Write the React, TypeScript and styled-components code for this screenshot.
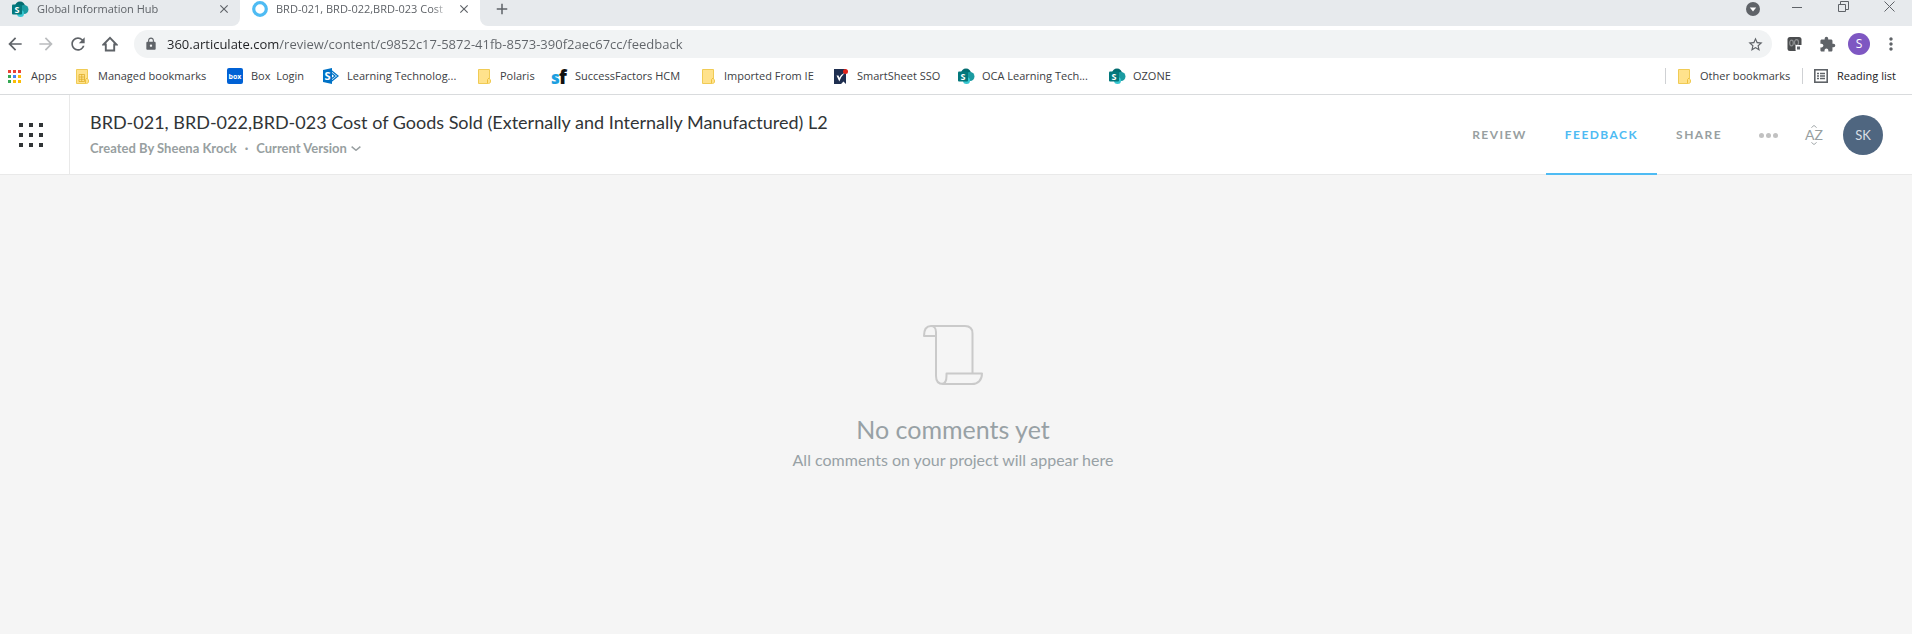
import React from "react";
import styled, { createGlobalStyle } from "styled-components";
import {
  MdArrowBack,
  MdArrowForward,
  MdRefresh,
  MdLock,
  MdStarBorder,
  MdExtension,
  MdMoreVert,
  MdClose,
  MdAdd,
} from "react-icons/md";

const uiFont = `"Open Sans", "Noto Sans", sans-serif`;
const appFont = `Lato, "Open Sans", sans-serif`;

const GlobalStyle = createGlobalStyle`
  *, *::before, *::after { box-sizing: border-box; }
  body { margin: 0; background: #f5f5f5; font-family: ${appFont}; }
  button { margin: 0; padding: 0; border: 0; background: none; font: inherit; color: inherit; cursor: pointer; }
  a { color: inherit; text-decoration: none; }
  svg { display: block; flex: none; }
`;

const Page = styled.div`
  display: flex;
  flex-direction: column;
  min-height: 100vh;
`;

/* Browser chrome */

const Browser = styled.div`
  background: #fff;
  font-family: ${uiFont};
  font-size: 11px;
  line-height: 16px;
  color: #3c4043;
`;

const TabStrip = styled.div`
  display: flex;
  height: 26px;
`;

const BrowserTab = styled.div<{ $active?: boolean }>`
  display: flex;
  align-items: center;
  width: 240px;
  padding: 0 9px 8px 12px;
  color: #5f6368;
  background: ${(p) => (p.$active ? "#fff" : "#e7eaed")};
  border-bottom-right-radius: ${(p) => (p.$active ? "0" : "8px")};
`;

const TabName = styled.button`
  flex: 1;
  min-width: 0;
  margin: 0 8px;
  overflow: hidden;
  white-space: nowrap;
  text-align: left;
  mask-image: linear-gradient(90deg, #000 calc(100% - 16px), transparent);
`;

const StripRest = styled.div`
  flex: 1;
  display: flex;
  align-items: flex-start;
  justify-content: space-between;
  padding: 0 0 0 14px;
  background: #e7eaed;
  border-bottom-left-radius: 8px;
  color: #5f6368;
`;

const WindowControls = styled.div`
  display: flex;
  align-items: flex-start;
`;

const IconButton = styled.button<{ $w: number; $h: number; $color?: string }>`
  display: flex;
  flex: none;
  align-items: center;
  justify-content: center;
  width: ${(p) => p.$w}px;
  height: ${(p) => p.$h}px;
  color: ${(p) => p.$color ?? "#5f6368"};
`;

const Toolbar = styled.div`
  display: flex;
  align-items: center;
  height: 35px;
  padding: 1px 5px 0 0;
`;

const Omnibox = styled.label`
  flex: 1;
  display: flex;
  align-items: center;
  height: 28px;
  margin: 0 7px 0 8px;
  padding: 0 2px 0 10px;
  border-radius: 14px;
  background: #f1f3f4;
  color: #5f6368;
`;

const UrlInput = styled.input`
  flex: 1;
  min-width: 0;
  margin-left: 9px;
  padding: 0;
  border: 0;
  outline: 0;
  font: 13px/20px ${uiFont};
  color: #5f6368;
  background: linear-gradient(90deg, #202124 112px, #5f6368 112px);
  background-clip: text;
  -webkit-background-clip: text;
  -webkit-text-fill-color: transparent;
`;

const Profile = styled.button`
  width: 22px;
  height: 22px;
  margin: 0 5px;
  border-radius: 50%;
  background: #7e57c2;
  color: #fff;
  font: 12px/22px ${uiFont};
`;

const BookmarksBar = styled.nav`
  display: flex;
  align-items: center;
  height: 34px;
  padding: 0 14px 3px 7px;
  border-bottom: 1px solid #d9dbdd;
`;

const Bookmark = styled.a`
  display: flex;
  align-items: center;
  gap: 8px;
  margin-right: 16px;
  white-space: pre;
`;

const IconSlot = styled.span`
  display: flex;
  justify-content: center;
  width: 16px;
`;

const BookmarkLabel = styled.span<{ $w: number }>`
  width: ${(p) => p.$w}px;
  text-align: left;
  white-space: pre;
`;

const BarEnd = styled.div`
  display: flex;
  align-items: center;
  margin-left: auto;
`;

const BarItem = styled.button`
  display: flex;
  align-items: center;
  gap: 8px;
  height: 16px;
  padding: 0 10px;
  border-left: 1px solid #cfd1d4;

  &:last-child {
    padding-right: 0;
    color: #202124;
  }
`;

/* Review application */

const Header = styled.header`
  display: flex;
  height: 80px;
  padding-right: 29px;
  background: #fff;
  box-shadow: inset 0 -1px #e9e9e9;
`;

const Launcher = styled.button`
  display: grid;
  grid-template-columns: repeat(3, 4px);
  gap: 6px;
  place-content: center;
  width: 70px;
  padding-right: 7px;
  border-right: 1px solid #e9e9e9;
`;

const LauncherDot = styled.span`
  height: 4px;
  background: #313537;
`;

const Project = styled.div`
  flex: 1;
  min-width: 0;
  padding: 16px 20px 0;
`;

const ProjectTitle = styled.h1`
  margin: 0 0 7px;
  font-size: 18px;
  font-weight: 400;
  line-height: 22px;
  color: #313537;
  white-space: nowrap;
`;

const ProjectMeta = styled.div`
  display: flex;
  align-items: center;
  gap: 8px;
  font-size: 13px;
  font-weight: 700;
  line-height: 16px;
  color: #989fa1;
`;

const VersionButton = styled.button`
  display: flex;
  align-items: center;
  gap: 4px;
`;

const HeaderNav = styled.nav`
  display: flex;
`;

const NavLink = styled.a<{ $active?: boolean }>`
  display: flex;
  align-items: center;
  padding: 0 19px;
  border-bottom: 2px solid ${(p) => (p.$active ? "#4ebbf3" : "transparent")};
  color: ${(p) => (p.$active ? "#4ebbf3" : "#989fa1")};
  font-size: 12px;
  font-weight: 700;
  letter-spacing: 0.12em;
`;

const HeaderTools = styled.div`
  display: flex;
  align-items: center;
  margin-left: 18px;
`;

const MoreButton = styled.button`
  display: flex;
  gap: 2px;
  margin-right: 27px;
`;

const MoreDot = styled.span`
  width: 5px;
  height: 5px;
  border-radius: 50%;
  background: #c1c1c1;
`;

const LanguageButton = styled.button`
  display: flex;
  flex-direction: column;
  align-items: center;
  margin-right: 20px;
  font-size: 14px;
  line-height: 14px;
  color: #989fa1;
`;

const Avatar = styled.button`
  width: 40px;
  height: 40px;
  border-radius: 50%;
  background: #4f6680;
  color: #d9dfe5;
  font-size: 13px;
`;

const Empty = styled.main`
  display: flex;
  flex-direction: column;
  align-items: center;
  padding: 150px 6px 40px 0;
  color: #98a1a5;
`;

const EmptyTitle = styled.h2`
  margin: 29px 0 6px;
  font-size: 25px;
  font-weight: 400;
  line-height: 30px;
`;

const EmptyText = styled.p`
  margin: 0;
  font-size: 16px;
  line-height: 20px;
`;

/* Drawings */

const SharePointIcon = () => (
  <svg width="17" height="17" viewBox="0 0 17 17">
    <circle cx="8" cy="5.5" r="5" fill="#036c70" />
    <circle cx="12" cy="8.5" r="4.5" fill="#1a9ba1" />
    <circle cx="8.5" cy="12.5" r="3.5" fill="#37c6d0" />
    <rect x="0" y="3.5" width="10" height="10" rx="1" fill="#03787c" />
    <text x="5" y="12" textAnchor="middle" fontFamily="Open Sans, sans-serif" fontWeight="700" fontSize="9" fill="#fff">S</text>
  </svg>
);

const OldSharePointIcon = () => (
  <svg width="16" height="16" viewBox="0 0 16 16">
    <path d="M8.5 2.8 L15 8 L8.5 13.2" fill="none" stroke="#0072c6" strokeWidth="1.3" />
    <path d="M9 5.5 L12 8 L9 10.5" fill="none" stroke="#0072c6" strokeWidth="1.3" />
    <path d="M0 2 L9 0 V16 L0 14Z" fill="#0072c6" />
    <text x="4.5" y="12" textAnchor="middle" fontFamily="Open Sans, sans-serif" fontWeight="700" fontSize="11" fill="#fff">S</text>
  </svg>
);

const RingIcon = () => (
  <svg width="16" height="16" viewBox="0 0 16 16">
    <circle cx="8" cy="8" r="6.3" fill="none" stroke="#4ebbf3" strokeWidth="3.2" />
  </svg>
);

const appColors = ["#ea4335", "#ea4335", "#ea4335", "#34a853", "#4285f4", "#fbbc04", "#34a853", "#fbbc04", "#fbbc04"];
const AppsIcon = () => (
  <svg width="14" height="13" viewBox="0 0 14 13">
    {appColors.map((c, i) => (
      <rect key={i} x={(i % 3) * 5} y={Math.floor(i / 3) * 5} width="3" height="3" fill={c} />
    ))}
  </svg>
);

const FolderIcon = ({ managed }: { managed?: boolean }) => (
  <svg width="13" height="15" viewBox="0 0 13 15">
    <path d="M.5 .5 H11.5 V10 L12.5 11 V13 Q12 14.5 10.5 14.5 H.5Z" fill="#ffe28c" stroke="#f0cb55" />
    <path d="M9.5 14 V10.5 L11 9" fill="none" stroke="#efc23c" />
    {managed && <path d="M3 5.5 H8.5 V12.5 H3Z M3 8 H8.5 M3 10.3 H8.5 M5.7 5.5 V12.5" fill="none" stroke="#dba91f" strokeWidth=".7" />}
  </svg>
);

const BoxIcon = () => (
  <svg width="16" height="16" viewBox="0 0 16 16">
    <rect width="16" height="16" rx="2" fill="#0061d5" />
    <text x="8" y="10.5" textAnchor="middle" fontFamily="Open Sans, sans-serif" fontWeight="700" fontSize="7" fill="#fff">box</text>
  </svg>
);

const SuccessFactorsIcon = () => (
  <svg width="17" height="24" viewBox="0 0 17 24">
    <text x="0" y="20" fontFamily="Open Sans, sans-serif" fontWeight="800" fontSize="17" fill="#1b9fe0">s</text>
    <text x="8" y="20" fontFamily="Open Sans, sans-serif" fontWeight="800" fontSize="19" fill="#111">f</text>
  </svg>
);

const SmartsheetIcon = () => (
  <svg width="16" height="17" viewBox="0 0 16 17">
    <path d="M1 1 H13 V16 L10.500 13.5 L8 16 H1Z" fill="#1f2f50" />
    <path d="M3.5 7.500 L6.300 13.5 Q8 8.500 12 4.500 Q8.500 6 6.300 9.800 L5.500 7.500Z" fill="#fff" />
    <circle cx="12.500" cy="3.500" r="2.500" fill="#e2231a" />
  </svg>
);

const HomeIcon = () => (
  <svg width="16" height="16" viewBox="0 0 16 16" fill="none" stroke="#5f6368" strokeWidth="1.9">
    <path d="M1.500 8.500 L8 1.900 L14.500 8.500 H12.200 V14.500 H3.800 V8.500Z" />
  </svg>
);

const CaptureIcon = () => (
  <svg width="16" height="16" viewBox="0 0 16 16">
    <rect x=".5" y="1" width="14" height="14" rx="2.500" fill="#4b4d4f" />
    <ellipse cx="4.500" cy="7" rx="1.800" ry="2.800" fill="none" stroke="#8e9092" strokeWidth="1.200" />
    <ellipse cx="9.500" cy="6.500" rx="2" ry="2.800" fill="none" stroke="#8e9092" strokeWidth="1.200" />
    <path d="M8.500 9 H15.500 V15.500 H10 Q8.500 15.500 8.500 14Z" fill="#fff" />
    <path d="M10 10.500 H13 V13.500 H10Z" fill="#5f6368" />
  </svg>
);

const ReadingListIcon = () => (
  <svg width="14" height="14" viewBox="0 0 14 14" stroke="#5f6368" fill="none">
    <rect x=".8" y=".8" width="12.400" height="12.400" strokeWidth="1.600" />
    <path d="M3 4.500 H5 M6 4.500 H11 M3 7 H5 M6 7 H11 M3 9.500 H5 M6 9.500 H11" strokeWidth="1.300" />
  </svg>
);

const TabSearchIcon = () => (
  <svg width="14" height="14" viewBox="0 0 14 14">
    <circle cx="7" cy="7" r="7" fill="#5f6368" />
    <path d="M3.800 5.500 H10.200 L7 9.500Z" fill="#fff" />
  </svg>
);

const Caret = ({ up, size }: { up?: boolean; size: number }) => (
  <svg width={size} height={size / 2} viewBox="0 0 8 4" fill="none" stroke="#989fa1" strokeWidth="1.200">
    <path d={up ? "M.5 3.500 L4 .6 L7.500 3.500" : "M.5 .5 L4 3.400 L7.500 .5"} />
  </svg>
);

const ScrollIcon = () => (
  <svg width="60" height="60" viewBox="0 0 60 60" fill="none" stroke="#cacaca" strokeWidth="2" strokeLinejoin="round">
    <path d="M8 1 H42 Q49.500 1 49.500 8.500 V48" />
    <path d="M8 1 C3.500 1 1 4.500 1 11 H13 V7 C13 3.500 11 1 8 1Z" />
    <path d="M13 8 V51 Q13 59 20 59 H49 C55 59 59 55 59 48.500 H23.500 V51 C23.500 56 21.500 59 18.500 59" />
  </svg>
);

const bookmarks = [
  { label: "Apps", width: 27, icon: <AppsIcon /> },
  { label: "Managed bookmarks", width: 113, icon: <FolderIcon managed /> },
  { label: "Box  Login", width: 56, icon: <BoxIcon /> },
  { label: "Learning Technolog...", width: 113, icon: <OldSharePointIcon /> },
  { label: "Polaris", width: 35, icon: <FolderIcon /> },
  { label: "SuccessFactors HCM", width: 109, icon: <SuccessFactorsIcon /> },
  { label: "Imported From IE", width: 93, icon: <FolderIcon /> },
  { label: "SmartSheet SSO", width: 85, icon: <SmartsheetIcon /> },
  { label: "OCA Learning Tech...", width: 111, icon: <SharePointIcon /> },
  { label: "OZONE", width: 40, icon: <SharePointIcon /> },
];

export default function App() {
  return (
    <Page>
      <GlobalStyle />
      <Browser>
        <TabStrip>
          <BrowserTab>
            <SharePointIcon />
            <TabName>Global Information Hub</TabName>
            <IconButton $w={14} $h={18} aria-label="Close tab"><MdClose size={14} /></IconButton>
          </BrowserTab>
          <BrowserTab $active>
            <RingIcon />
            <TabName>BRD-021, BRD-022,BRD-023 Cost</TabName>
            <IconButton $w={14} $h={18} aria-label="Close tab"><MdClose size={14} /></IconButton>
          </BrowserTab>
          <StripRest>
            <IconButton $w={16} $h={18} aria-label="New tab"><MdAdd size={18} /></IconButton>
            <WindowControls>
              <IconButton $w={42} $h={18} aria-label="Search tabs"><TabSearchIcon /></IconButton>
              <IconButton $w={46} $h={13} aria-label="Minimize">
                <svg width="10" height="11" stroke="#5f6368"><path d="M0 6.500 H10" /></svg>
              </IconButton>
              <IconButton $w={46} $h={13} aria-label="Restore">
                <svg width="11" height="11" fill="none" stroke="#5f6368"><path d="M.5 3.500 H7.500 V10.500 H.5Z M2.500 3.500 V.5 H10.500 V8.500 H7.500" /></svg>
              </IconButton>
              <IconButton $w={46} $h={13} aria-label="Close window">
                <svg width="11" height="11" stroke="#5f6368"><path d="M.5 .5 L10.500 10.500 M10.500 .5 L.5 10.500" /></svg>
              </IconButton>
            </WindowControls>
          </StripRest>
        </TabStrip>

        <Toolbar>
          <IconButton $w={30} $h={28} aria-label="Back"><MdArrowBack size={20} /></IconButton>
          <IconButton $w={32} $h={28} $color="#babcbe" aria-label="Forward"><MdArrowForward size={20} /></IconButton>
          <IconButton $w={32} $h={28} aria-label="Reload"><MdRefresh size={20} /></IconButton>
          <IconButton $w={32} $h={28} aria-label="Home"><HomeIcon /></IconButton>
          <Omnibox>
            <MdLock size={14} />
            <UrlInput
              aria-label="Address"
              defaultValue="360.articulate.com/review/content/c9852c17-5872-41fb-8573-390f2aec67cc/feedback"
            />
            <IconButton $w={30} $h={28} aria-label="Bookmark this page"><MdStarBorder size={17} /></IconButton>
          </Omnibox>
          <IconButton $w={32} $h={28} aria-label="Screen capture"><CaptureIcon /></IconButton>
          <IconButton $w={32} $h={28} aria-label="Extensions"><MdExtension size={17} /></IconButton>
          <Profile>S</Profile>
          <IconButton $w={32} $h={28} aria-label="Menu"><MdMoreVert size={20} /></IconButton>
        </Toolbar>

        <BookmarksBar>
          {bookmarks.map((b) => (
            <Bookmark key={b.label} href="#">
              <IconSlot>{b.icon}</IconSlot>
              <BookmarkLabel $w={b.width}>{b.label}</BookmarkLabel>
            </Bookmark>
          ))}
          <BarEnd>
            <BarItem>
              <IconSlot><FolderIcon /></IconSlot>
              <BookmarkLabel $w={92}>Other bookmarks</BookmarkLabel>
            </BarItem>
            <BarItem>
              <IconSlot><ReadingListIcon /></IconSlot>
              <BookmarkLabel $w={61}>Reading list</BookmarkLabel>
            </BarItem>
          </BarEnd>
        </BookmarksBar>
      </Browser>

      <Header>
        <Launcher aria-label="Apps">
          {Array.from({ length: 9 }, (_, i) => <LauncherDot key={i} />)}
        </Launcher>
        <Project>
          <ProjectTitle>BRD-021, BRD-022,BRD-023 Cost of Goods Sold (Externally and Internally Manufactured) L2</ProjectTitle>
          <ProjectMeta>
            <span>Created By Sheena Krock</span>
            <span>·</span>
            <VersionButton>Current Version<Caret size={10} /></VersionButton>
          </ProjectMeta>
        </Project>
        <HeaderNav>
          <NavLink href="#review">REVIEW</NavLink>
          <NavLink href="#feedback" $active>FEEDBACK</NavLink>
          <NavLink href="#share">SHARE</NavLink>
        </HeaderNav>
        <HeaderTools>
          <MoreButton aria-label="More"><MoreDot /><MoreDot /><MoreDot /></MoreButton>
          <LanguageButton aria-label="Language"><Caret up size={6} />AZ<Caret size={6} /></LanguageButton>
          <Avatar>SK</Avatar>
        </HeaderTools>
      </Header>

      <Empty>
        <ScrollIcon />
        <EmptyTitle>No comments yet</EmptyTitle>
        <EmptyText>All comments on your project will appear here</EmptyText>
      </Empty>
    </Page>
  );
}
